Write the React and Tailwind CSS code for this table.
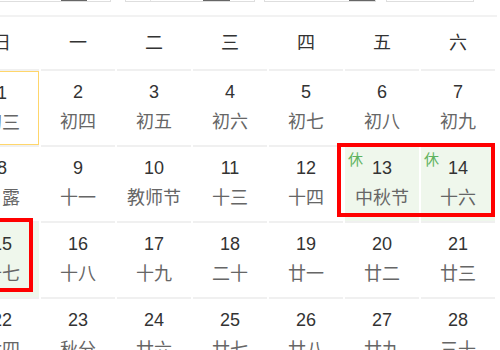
// Lunar month calendar, cropped view
const weekdays = ["日", "一", "二", "三", "四", "五", "六"];

const weeks = [
  [
    { d: 1, l: "初三", today: true },
    { d: 2, l: "初四" },
    { d: 3, l: "初五" },
    { d: 4, l: "初六" },
    { d: 5, l: "初七" },
    { d: 6, l: "初八" },
    { d: 7, l: "初九" },
  ],
  [
    { d: 8, l: "白露" },
    { d: 9, l: "十一" },
    { d: 10, l: "教师节" },
    { d: 11, l: "十三" },
    { d: 12, l: "十四" },
    { d: 13, l: "中秋节", rest: true },
    { d: 14, l: "十六", rest: true },
  ],
  [
    { d: 15, l: "十七", rest: true },
    { d: 16, l: "十八" },
    { d: 17, l: "十九" },
    { d: 18, l: "二十" },
    { d: 19, l: "廿一" },
    { d: 20, l: "廿二" },
    { d: 21, l: "廿三" },
  ],
  [
    { d: 22, l: "廿四" },
    { d: 23, l: "秋分" },
    { d: 24, l: "廿六" },
    { d: 25, l: "廿七" },
    { d: 26, l: "廿八" },
    { d: 27, l: "廿九" },
    { d: 28, l: "三十" },
  ],
];

const DayCell = ({ day }) => (
  <div className="mx-px border-t-2 border-[#f0f0f0] h-[76px]">
    <div
      className={`relative h-[74px] flex flex-col items-center ${
        day.rest ? "bg-[#eff7ec]" : ""
      } ${day.today ? "border border-[#ffd66b]" : ""}`}
    >
      {day.rest && (
        <span className="absolute left-[3px] top-[5px] text-[15px] leading-none text-[#5fb35f]">
          休
        </span>
      )}
      <span className="pt-[9px] text-[18px] leading-[24px] text-[#333]">{day.d}</span>
      <span className="mt-[6px] text-[18px] leading-[24px] text-[#666]">{day.l}</span>
    </div>
  </div>
);

export default function App() {
  return (
    <div className="relative w-[500px] h-[350px] overflow-hidden bg-white font-['Liberation_Sans','Noto_Sans_CJK_SC',sans-serif]">
      {/* bottoms of the year / month selects above */}
      <div className="h-[15px] overflow-hidden">
        <div className="flex -mt-[26px]">
          <div className="w-[111px] h-[28px] border-b border-r border-[#dedede] flex items-end">
            <div className="ml-[61px] w-[26px] h-[2px] bg-[#666]" />
          </div>
          <div className="ml-[14px] w-[130px] h-[28px] border border-[#dedede] flex items-end">
            <div className="ml-[24px] w-px h-full bg-[#e4e4e4]" />
            <div className="ml-[52px] w-[27px] h-[2px] bg-[#666]" />
          </div>
          <div className="ml-[9px] w-[112px] h-[28px] border border-[#dedede] flex items-end justify-end">
            <div className="w-[26px] h-[2px] bg-[#666]" />
          </div>
          <div className="ml-[10px] w-[88px] h-[28px] border border-[#dedede]" />
        </div>
      </div>
      <div className="w-[497px] h-[2px] bg-[#f2f2f2]" />

      <div className="-ml-[36px] w-[532px]">
        <div className="grid grid-cols-7 h-[52px] items-center">
          {weekdays.map((w) => (
            <div key={w} className="text-center text-[18px] text-[#333]">
              {w}
            </div>
          ))}
        </div>
        {weeks.map((week, i) => (
          <div key={i} className="grid grid-cols-7">
            {week.map((day) => (
              <DayCell key={day.d} day={day} />
            ))}
          </div>
        ))}
      </div>

      {/* red annotation boxes */}
      <div className="absolute left-[337px] top-[143px] w-[158px] h-[74px] border-4 border-[#ff0000]" />
      <div className="absolute -left-[4px] top-[218px] w-[37px] h-[74px] border-4 border-[#ff0000]" />
    </div>
  );
}
